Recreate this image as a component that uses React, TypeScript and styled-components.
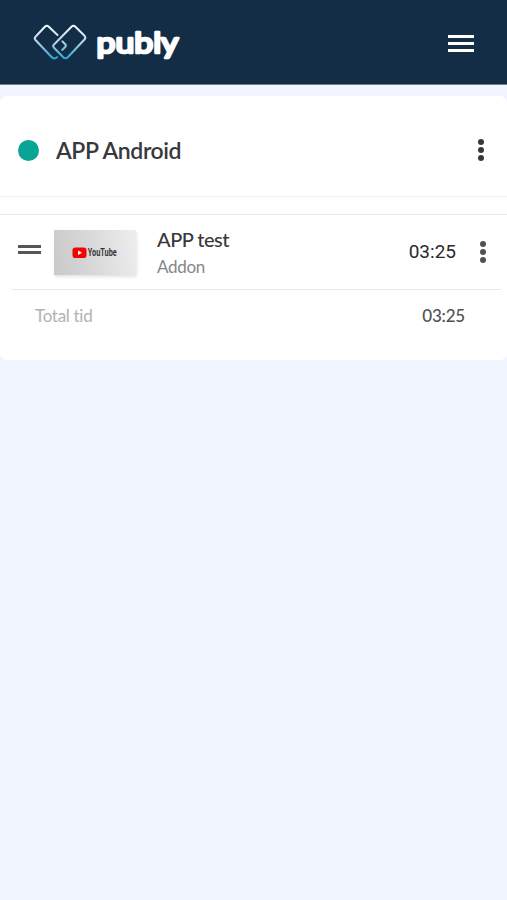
import React from 'react';
import styled, { createGlobalStyle } from 'styled-components';

const Global = createGlobalStyle`
  * { box-sizing: border-box; }
  body { margin: 0; background: #f0f5ff; font-family: Lato, "Open Sans", sans-serif; }
`;

const Page = styled.div`
  display: flex;
  flex-direction: column;
  min-height: 900px;
  background: #f0f5ff;
`;

const TopBar = styled.header`
  display: flex;
  align-items: center;
  justify-content: space-between;
  height: 85px;
  padding: 0 33px;
  background: #132d46;
  border-bottom: 1px solid #72808f;
`;

const Logo = styled.svg`
  display: block;
  width: 150px;
  height: 44px;
`;

const MenuButton = styled.button`
  display: flex;
  flex-direction: column;
  gap: 4px;
  width: 26px;
  padding: 2px 0 0;
  border: 0;
  background: none;
`;

const MenuBar = styled.span`
  height: 3px;
  background: #fff;
`;

const Card = styled.main`
  margin-top: 11px;
  height: 264px;
  background: #fff;
  border-radius: 7px;
`;

const Heading = styled.section`
  display: flex;
  align-items: center;
  height: 101px;
  padding: 8px 23px 0 18px;
  border-bottom: 1px solid #eeeeee;
`;

const Status = styled.span`
  width: 21px;
  height: 21px;
  margin-right: 17px;
  border-radius: 50%;
  background: #08a596;
`;

const Label = styled.span<{ $size: number; $color: string; $weight?: number; $track?: number; $font?: string }>`
  font-size: ${p => p.$size}px;
  line-height: 28px;
  color: ${p => p.$color};
  font-weight: ${p => p.$weight ?? 400};
  letter-spacing: ${p => p.$track ?? 0}px;
  font-family: ${p => p.$font ?? 'Lato'}, sans-serif;
  font-variant-ligatures: none;
  white-space: nowrap;
`;

const Dots = styled.button<{ $color: string }>`
  display: flex;
  flex-direction: column;
  gap: 2.4px;
  margin-left: auto;
  padding: 0;
  border: 0;
  background: none;
  color: ${p => p.$color};
`;

const Dot = styled.span`
  width: 6px;
  height: 6px;
  border-radius: 50%;
  background: currentColor;
`;

const List = styled.section`
  margin-top: 17px;
  border-top: 1px solid #ebebeb;
`;

const Item = styled.div`
  display: flex;
  align-items: center;
  height: 75px;
  margin: 0 6px 0 12px;
  padding: 0 15px 0 6px;
  border-bottom: 1px solid #eaeaea;
`;

const Handle = styled.span`
  width: 23px;
  height: 9px;
  margin: 0 13px 5px 0;
  border: solid #55565a;
  border-width: 3px 0;
`;

const Thumb = styled.div`
  display: flex;
  align-items: center;
  justify-content: center;
  width: 82px;
  height: 45px;
  margin: 1px 21px 0 0;
  background: linear-gradient(80deg, #c9c9ca, #d8d8d8 45%, #eeeeee);
  box-shadow: 1px 2px 3px #0000001c;
`;

const Names = styled.div`
  display: flex;
  flex-direction: column;
  padding-top: 2px;
`;

const Right = styled.div`
  display: flex;
  align-items: center;
  gap: 24px;
  margin-left: auto;
`;

const Total = styled.footer`
  display: flex;
  justify-content: space-between;
  padding: 12px 42px 0 35px;
`;

const More = ({ color }: { color: string }) => (
  <Dots $color={color} aria-label="More options"><Dot /><Dot /><Dot /></Dots>
);

const PublyLogo = () => (
  <Logo viewBox="33 20 150 44" role="img" aria-label="publy">
    <defs>
      <linearGradient id="mark" x1="0" y1="25" x2="0" y2="59" gradientUnits="userSpaceOnUse">
        <stop offset="0" stopColor="#f4faff" />
        <stop offset=".5" stopColor="#b4d5e8" />
        <stop offset="1" stopColor="#25a5d0" />
      </linearGradient>
    </defs>
    <g fill="none" stroke="url(#mark)" strokeWidth="2" strokeLinecap="round" strokeLinejoin="round">
      <path d="M57.5 35L48.8 26.7Q46.8 24.9 44.9 26.7L35.5 36.7Q34 38.3 35.5 40L51.5 57Q54 59.7 57 57.2" />
      <path d="M62.4 41.4L65.2 44.2Q66.5 45.6 65.2 47L62.2 50" />
      <path d="M53.8 44.8L71.5 26.7Q73.4 24.9 75.4 26.7L84.5 35.8Q86.2 37.7 84.5 39.5L68 57Q65.5 59.6 63 57L53.8 47.5Q52.5 46.1 53.8 44.8" />
    </g>
    <text x="96.5" y="52.5" fill="#fff" stroke="#fff" strokeWidth="2.7" strokeLinejoin="round" strokeLinecap="round" fontFamily="Lato, sans-serif" fontWeight="400" fontSize="29.5" textLength="82" lengthAdjust="spacingAndGlyphs">publy</text>
  </Logo>
);

const YouTube = () => (
  <svg width="60" height="30" viewBox="-7 -8 60 30">
    <rect x="0.5" y="1.5" width="14" height="10.5" rx="2.8" fill="#f00505" />
    <path d="M6 4.5L10 6.7L6 8.9Z" fill="#fff" />
    <text x="15.8" y="10.4" fill="#353535" fontFamily="Roboto, sans-serif" fontWeight="700" fontSize="11" textLength="29" lengthAdjust="spacingAndGlyphs">YouTube</text>
  </svg>
);

export default function App() {
  return (
    <Page>
      <Global />
      <TopBar>
        <PublyLogo />
        <MenuButton aria-label="Menu"><MenuBar /><MenuBar /><MenuBar /></MenuButton>
      </TopBar>
      <Card>
        <Heading>
          <Status />
          <Label $size={23} $color="#38393c" $weight={600} $track={-0.42}>APP Android</Label>
          <More color="#36373a" />
        </Heading>
        <List>
          <Item>
            <Handle />
            <Thumb><YouTube /></Thumb>
            <Names>
              <Label $size={20} $color="#38393c" $weight={500} $track={-0.5}>APP test</Label>
              <Label $size={17} $color="#868686" $track={-0.3}>Addon</Label>
            </Names>
            <Right>
              <Label $size={19} $color="#29292b" $font="Roboto">03:25</Label>
              <More color="#505154" />
            </Right>
          </Item>
          <Total>
            <Label $size={17} $color="#b2b2b2" $track={-0.3}>Total tid</Label>
            <Label $size={17} $color="#505154" $weight={500} $track={-0.2}>03:25</Label>
          </Total>
        </List>
      </Card>
    </Page>
  );
}
